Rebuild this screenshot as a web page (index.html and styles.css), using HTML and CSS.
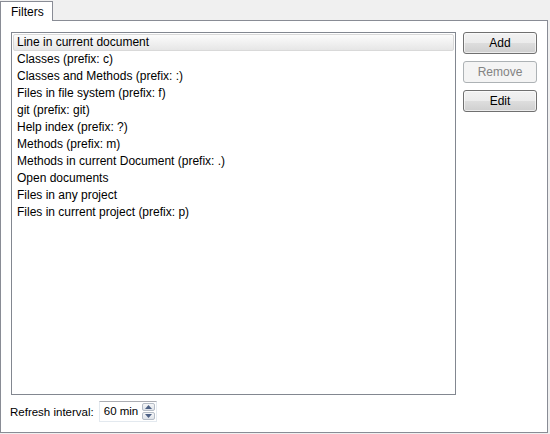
FILE: index.html
```html
<!DOCTYPE html>
<html>
<head>
<meta charset="utf-8">
<link rel="stylesheet" href="styles.css">
</head>
<body>
<div class="tabs">
  <div class="tab">Filters</div>
</div>
<div class="panel">
  <div class="main">
    <div class="list">
      <div class="item selected">Line in current document</div>
      <div class="item">Classes (prefix: c)</div>
      <div class="item">Classes and Methods (prefix: :)</div>
      <div class="item">Files in file system (prefix: f)</div>
      <div class="item">git (prefix: git)</div>
      <div class="item">Help index (prefix: ?)</div>
      <div class="item">Methods (prefix: m)</div>
      <div class="item">Methods in current Document (prefix: .)</div>
      <div class="item">Open documents</div>
      <div class="item">Files in any project</div>
      <div class="item">Files in current project (prefix: p)</div>
    </div>
    <div class="buttons">
      <button class="btn">Add</button>
      <button class="btn" disabled>Remove</button>
      <button class="btn">Edit</button>
    </div>
  </div>
  <div class="refresh">
    <span class="label">Refresh interval:</span>
    <div class="spin">
      <span class="value">60 min</span>
      <div class="arrows">
        <div class="arrow up"><svg width="7" height="4" viewBox="0 0 7 4"><path d="M0 4 L3.5 0 L7 4 Z" fill="#4d6185"/></svg></div>
        <div class="arrow down"><svg width="7" height="4" viewBox="0 0 7 4"><path d="M0 0 L3.5 4 L7 0 Z" fill="#4d6185"/></svg></div>
      </div>
    </div>
  </div>
</div>
</body>
</html>
```
FILE: styles.css
```css
* { box-sizing: border-box; }
html, body { margin: 0; padding: 0; }
body {
  background: #f0f0f0;
  font-family: "Liberation Sans", Arial, sans-serif;
  font-size: 12px;
  color: #000;
  width: 550px;
  height: 434px;
}
.tabs {
  height: 21px;
  padding-top: 1px;
  display: flex;
  position: relative;
  z-index: 1;
}
.tab {
  width: 53px;
  height: 20px;
  background: #fff;
  border: 1px solid #898c95;
  border-bottom: none;
  padding: 3px 0 0 10px;
  line-height: 14px;
}
.panel {
  margin-top: -1px;
  width: 548px;
  height: 413px;
  background: #fff;
  border: 1px solid #898c95;
  padding: 11px 10px 0 10px;
  display: flex;
  flex-direction: column;
}
.main {
  display: flex;
  gap: 7px;
}
.list {
  width: 446px;
  height: 363px;
  border: 1px solid #828790;
  padding: 1px;
}
.item {
  height: 17px;
  padding-left: 3px;
  border: 1px solid transparent;
  line-height: 15px;
}
.item.selected {
  border-color: #d9d9d9;
  border-radius: 2px;
  background: linear-gradient(#fcfcfc, #e6e6e6);
}
.buttons {
  display: flex;
  flex-direction: column;
  gap: 7px;
}
.btn {
  width: 74px;
  height: 22px;
  border: 1px solid #707070;
  border-radius: 3px;
  background: linear-gradient(#f2f2f2 0%, #ebebeb 50%, #dddddd 51%, #cfcfcf 100%);
  font-family: "Liberation Sans", Arial, sans-serif;
  font-size: 12px;
  color: #000;
  padding: 0;
  box-shadow: inset 0 0 0 1px rgba(255,255,255,0.6);
}
.btn:disabled {
  border-color: #adb2b5;
  background: #f4f4f4;
  color: #838383;
  box-shadow: none;
}
.refresh {
  margin-top: 6px;
  display: flex;
  align-items: center;
  gap: 5px;
}
.label { padding-top: 1px; font-size: 11.5px; margin-left: -1px; }
.spin {
  width: 58px;
  height: 21px;
  border: 1px solid #e3e9ef;
  border-top-color: #abadb3;
  display: flex;
  align-items: stretch;
  justify-content: space-between;
  padding: 1px 1px 1px 4px;
}
.value { line-height: 17px; font-size: 11.5px; }
.arrows {
  width: 13px;
  display: flex;
  flex-direction: column;
  gap: 1px;
}
.arrow {
  flex: 1;
  border: 1px solid #b5bcc6;
  border-radius: 2px;
  background: linear-gradient(#f5f6f8, #dfe3e9);
  display: flex;
  align-items: center;
  justify-content: center;
}
.arrow svg { display: block; }
```
